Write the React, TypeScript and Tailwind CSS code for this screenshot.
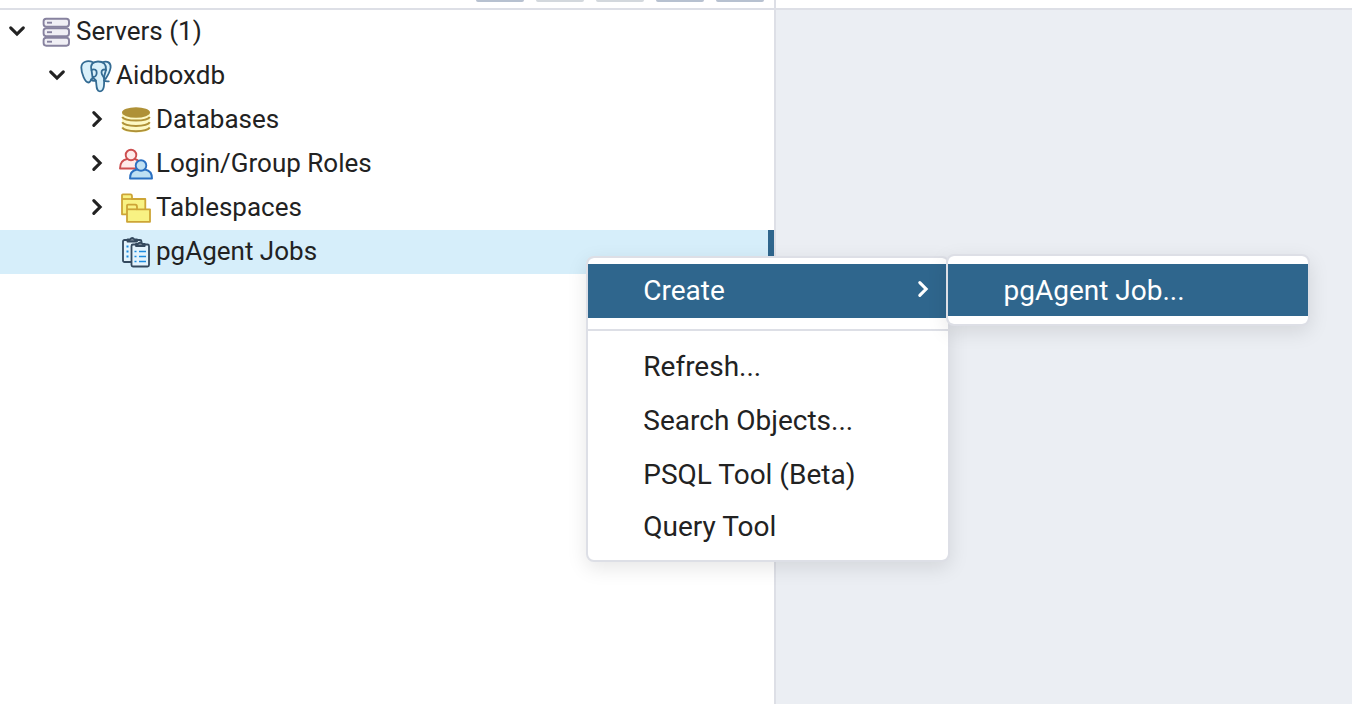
import type { ReactNode } from "react";

function Chevron({ down = false, className = "" }: { down?: boolean; className?: string }) {
  return (
    <svg viewBox="0 0 20 20" className={`h-5 w-5 shrink-0 ${className}`} fill="none" stroke="currentColor" strokeWidth="3.1" strokeLinecap="round" strokeLinejoin="miter">
      <path d={down ? "M3.700 6.800L10 13.100L16.300 6.800" : "M6.800 3.700L13.100 10L6.800 16.300"} />
    </svg>
  );
}

function ServersIcon() {
  return (
    <svg viewBox="0 0 36 36" className="h-9 w-9" fill="#f0eff5" stroke="#87829f" strokeWidth="1.9">
      {[5.7, 15.2, 24.7].map((y) => (
        <g key={y}>
          <rect x="5.6" y={y} width="25.400" height="8" rx="2.6" />
          <path d={`M9 ${y + 4}h5`} />
        </g>
      ))}
    </svg>
  );
}

function ElephantIcon() {
  return (
    <svg viewBox="0 0 36 36" className="h-9 w-9" fill="#d9f0fa" stroke="#336b93" strokeWidth="1.8" strokeLinecap="round" strokeLinejoin="round">
      <path d="M15.500 5.500C9.500 2.800 3.500 4.500 3.300 10.500C3.300 16 7 25.500 10.500 25.500C12.500 25.500 13.200 22 15.500 20L17 14Z" />
      <path d="M24 5.500C29.500 3 33 6 32.600 10.500C32 15 29.500 19 27.500 22L24 20Z" />
      <path d="M13.500 13C12 7.500 15 4.500 20 4.500C25.500 4.500 28.500 7.500 28 12.500C27.700 15.500 26 18 26 21C26.300 27 26.500 34.300 22 34.300C17.500 34.300 19 27.500 17.800 23.500C16.500 22 15.500 21.500 14.500 20Z" />
      <path d="M13.500 13C16.500 11.500 19 13 18.700 16C18.500 18.500 17 20 15 20M28 13C25.500 11.800 23.300 13 23.500 15.500C23.700 18 25.200 19 26 21M17.800 23.500C16 24.300 14.500 24 13 22.500M26 23.500C27.500 24.500 29.300 24.500 30.800 24.300" fill="none" />
    </svg>
  );
}

function DatabasesIcon() {
  return (
    <svg viewBox="0 0 36 36" className="h-9 w-9">
      <path d="M4 10V27C4 33 32 33 32 27V10Z" fill="#fdf9c4" />
      <ellipse cx="18" cy="11.500" rx="14" ry="5.200" fill="#af9137" />
      <g fill="none" stroke="#af9137" strokeWidth="2">
        <path d="M4.200 16C7 20.800 29 20.800 31.800 16" />
        <path d="M4.200 21.300C7 26.100 29 26.100 31.800 21.300" />
        <path d="M4.200 26.600C7 31.400 29 31.400 31.800 26.600" />
      </g>
    </svg>
  );
}

function RolesIcon() {
  return (
    <svg viewBox="0 0 36 36" className="h-9 w-9" strokeWidth="1.9" strokeLinejoin="round">
      <g fill="#ffebea" stroke="#cd4f50">
        <path d="M2 23.500C2 18 4.500 14.800 9 14H17C21 15 22.500 18 22.500 23.500Z" />
        <circle cx="13" cy="10" r="5.300" />
      </g>
      <g fill="#bfe0f3" stroke="#2b70c2">
        <path d="M12 33.500C12 28.500 14 25.300 19 24.500H27C31.500 25.300 34 28.500 34 33.500Z" />
        <circle cx="23" cy="20.500" r="5.300" />
      </g>
    </svg>
  );
}

function FoldersIcon() {
  return (
    <svg viewBox="0 0 36 36" className="h-9 w-9" fill="#f8f283" stroke="#cda536" strokeWidth="1.800" strokeLinejoin="round">
      <path d="M4 25.300V6.200Q4 5.400 4.800 5.400H12.500Q14 5.400 14 7.500V10H27.300V25.300Z" />
      <path d="M4 10H14" />
      <path d="M9 32.800V16.600Q9 15.600 10 15.600H17.200Q19 15.600 19 18V20.300H32V32.800Z" />
      <path d="M9 20.300H19" />
    </svg>
  );
}

function JobsIcon() {
  return (
    <svg viewBox="0 0 36 36" className="h-9 w-9" fill="#e3f3fc" stroke="#34495e" strokeWidth="1.800" strokeLinejoin="round">
      <rect x="5" y="7" width="18.500" height="22" rx="1.500" />
      <path d="M9.500 8.500V6.500H12Q14.200 3.500 16.500 6.500H19V8.500Z" fill="#7d8b98" />
      <path d="M8.500 13.500h2M8.500 18.500h2M8.500 23.500h2" stroke="#1b8be0" strokeWidth="2" />
      <rect x="13.500" y="11.500" width="17.500" height="22" rx="1.500" />
      <path d="M18 13V11H20Q22.200 8 24.500 11H26.700V13Z" fill="#7d8b98" />
      <path d="M16.500 18.500h2M21 18.500h7M16.500 23.500h2M21 23.500h7M16.500 28.500h2M21 28.500h7" stroke="#1b8be0" strokeWidth="1.600" />
    </svg>
  );
}

type RowProps = { indent: string; icon: ReactNode; label: string; state?: "open" | "closed"; selected?: boolean };

function TreeRow({ indent, icon, label, state, selected }: RowProps) {
  return (
    <li className={`flex h-11 items-center pb-[2px] ${indent} ${selected ? "border-r-[6px] border-[#2f668d] bg-[#d6eefa]" : ""}`}>
      <span className="mr-[11px] flex w-5 shrink-0">{state && <Chevron down={state === "open"} className="text-[#222]" />}</span>
      <span className="shrink-0">{icon}</span>
      <span className="ml-[2px] whitespace-nowrap text-[26px] leading-[42px]">{label}</span>
    </li>
  );
}

const buttons = ["bg-[#b7c1d0]", "bg-[#d3d8dd]", "bg-[#d3d8dd]", "bg-[#b7c1d0]", "bg-[#b7c1d0]"];
const menuPanel = "absolute w-[364px] rounded-lg border-2 border-[#dddfe6] bg-white bg-clip-padding text-[28px] shadow-[0_6px_20px_rgba(0,0,0,0.1)]";

export default function App() {
  return (
    <div className="relative flex h-[704px] w-[1352px] overflow-hidden bg-white text-[#222] [font-family:Roboto,sans-serif]">
      <aside className="flex w-[776px] shrink-0 flex-col border-r-2 border-[#dddfe6]">
        <div className="flex h-[10px] shrink-0 items-start justify-end gap-3 border-b-2 border-[#dddfe6] pr-[10px]">
          {buttons.map((color, i) => (
            <span key={i} className={`h-[2px] w-12 rounded-b-[4px] ${color}`} />
          ))}
        </div>
        <ul>
          <TreeRow indent="pl-[7px]" icon={<ServersIcon />} label="Servers (1)" state="open" />
          <TreeRow indent="pl-[47px]" icon={<ElephantIcon />} label="Aidboxdb" state="open" />
          <TreeRow indent="pl-[87px]" icon={<DatabasesIcon />} label="Databases" state="closed" />
          <TreeRow indent="pl-[87px]" icon={<RolesIcon />} label="Login/Group Roles" state="closed" />
          <TreeRow indent="pl-[87px]" icon={<FoldersIcon />} label="Tablespaces" state="closed" />
          <TreeRow indent="pl-[87px]" icon={<JobsIcon />} label="pgAgent Jobs" selected />
        </ul>
      </aside>
      <main className="flex flex-1 flex-col">
        <div className="h-[10px] border-b-2 border-[#dddfe6]" />
        <div className="flex-1 bg-[#ebeef3]" />
      </main>

      <div className={`${menuPanel} left-[586px] top-[256px] h-[306px] pt-[6px]`}>
        <div className="flex h-[54px] items-center justify-between bg-[#2f668d] pl-[55.3px] pr-[15px] text-white">
          Create
          <Chevron className="relative -top-[2px]" />
        </div>
        <div className="mt-[11px] border-t-2 border-[#dddfe6] pt-[9px]">
          <div className="h-[54px] pl-[55.3px] leading-[54px]">Refresh...</div>
          <div className="h-[54px] pl-[55.3px] leading-[54px]">Search Objects...</div>
          <div className="h-[54px] pl-[55.3px] leading-[54px]">PSQL Tool (Beta)</div>
          <div className="h-[50px] pl-[55.3px] leading-[50px]">Query Tool</div>
        </div>
      </div>

      <div className={`${menuPanel} left-[946px] top-[254px] h-[72px] py-2`}>
        <div className="h-[52px] bg-[#2f668d] pl-[55.5px] leading-[54px] text-white">pgAgent Job...</div>
      </div>
    </div>
  );
}
